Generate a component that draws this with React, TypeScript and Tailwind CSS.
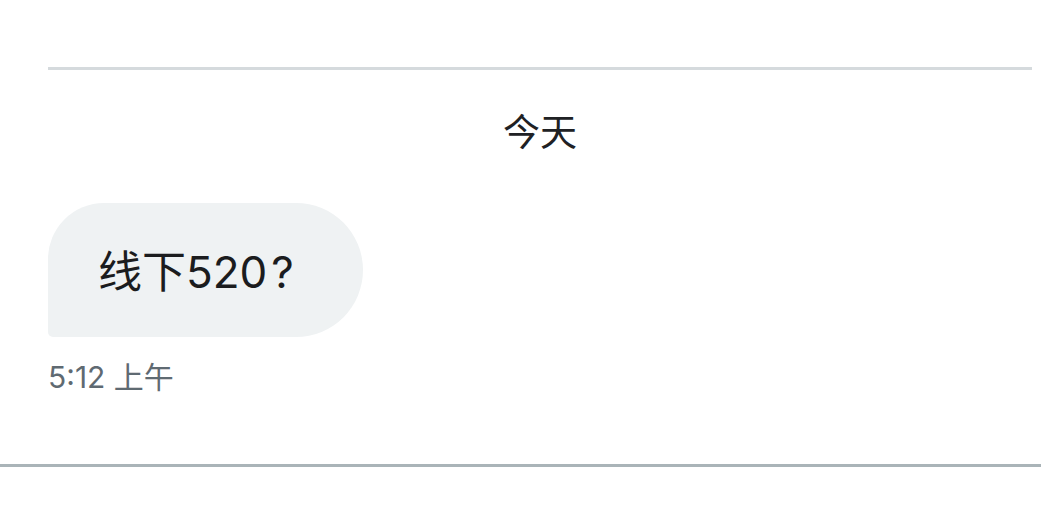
export default function App() {
  const font = { fontFamily: 'Inter, "Noto Sans CJK SC", sans-serif' };

  return (
    <div className="w-[1041px] h-[514px] bg-white overflow-hidden" style={font}>
      <div className="pt-[67px] pl-[48px] pr-[9px]">
        <div className="h-[3px] bg-[#d5dadd]" />

        <div className="mt-[44px] text-center text-[37px] leading-none text-[#202124]">
          今天
        </div>

        <div className="mt-[52px] flex">
          <div className="w-[315px] h-[134px] bg-[#eff2f3] rounded-tl-[56px] rounded-tr-[67px] rounded-br-[67px] rounded-bl-[5px] flex items-center pl-[50px] pt-[4px]">
            <span className="text-[44px] leading-none text-[#1b1c1e]">
              线下520<span className="ml-[4px]">?</span>
            </span>
          </div>
        </div>

        <div className="mt-[25px] text-[30px] leading-none text-[#5f6a72]">
          5:12 上午
        </div>
      </div>

      <div className="mt-[72px] h-[3px] bg-[#aab4b8]" />
    </div>
  );
}
